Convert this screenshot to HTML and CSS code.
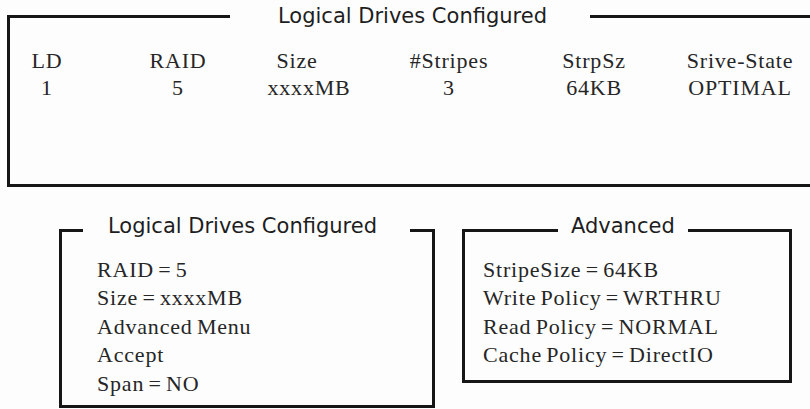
FILE: index.html
```html
<!DOCTYPE html>
<html lang="en">
<head>
    <meta charset="UTF-8">
    <meta name="viewport" content="width=device-width, initial-scale=1.0">
    <title>Logical Drives Configured</title>
    <link rel="stylesheet" href="styles.css">
</head>
<body>
    <fieldset class="panel panel-drives">
        <legend class="panel-title">Logical Drives Configured</legend>
        <div class="drive-table">
            <span>LD</span>
            <span>RAID</span>
            <span>Size</span>
            <span>#Stripes</span>
            <span>StrpSz</span>
            <span>Srive-State</span>
            <span>1</span>
            <span>5</span>
            <span class="size-cell">xxxxMB</span>
            <span>3</span>
            <span>64KB</span>
            <span>OPTIMAL</span>
        </div>
    </fieldset>

    <div class="settings">
        <fieldset class="panel panel-ld">
            <legend class="panel-title">Logical Drives Configured</legend>
            <ul class="option-list">
                <li>RAID = 5</li>
                <li>Size = xxxxMB</li>
                <li>Advanced Menu</li>
                <li>Accept</li>
                <li>Span = NO</li>
            </ul>
        </fieldset>

        <fieldset class="panel panel-advanced">
            <legend class="panel-title">Advanced</legend>
            <ul class="option-list">
                <li>StripeSize = 64KB</li>
                <li>Write Policy = WRTHRU</li>
                <li>Read Policy = NORMAL</li>
                <li>Cache Policy = DirectIO</li>
            </ul>
        </fieldset>
    </div>
</body>
</html>
```

FILE: styles.css
```css
body {
    margin: 0;
    background: #fdfdfd;
    color: #262626;
    font-family: "Liberation Serif", "Times New Roman", serif;
    font-size: 22px;
    letter-spacing: 0.8px;
    word-spacing: -2px;
    overflow: hidden;
}

.panel {
    margin: 0;
    min-width: 0;
    border: 3px solid #161616;
}

.panel-title {
    font-family: "DejaVu Sans", sans-serif;
    font-size: 21px;
    line-height: 30px;
    letter-spacing: 0;
    word-spacing: 0;
    color: #1e1e1e;
}

/* top table, runs off the right edge */
.panel-drives {
    margin: 1px 0 0 7px;
    border-right: none;
    padding: 16px 0 83px 0;
}

.panel-drives .panel-title {
    margin-left: 220px;
    padding: 0 43px 0 48px;
}

.drive-table {
    display: grid;
    grid-template-columns: 74px 188px 50px 254px 36px 256px;
    grid-auto-rows: 27px;
    justify-items: center;
    line-height: 27px;
    white-space: nowrap;
}

.drive-table .size-cell {
    margin-left: 24px;
}

.settings {
    display: flex;
    align-items: flex-start;
    gap: 27px;
    margin: 23.5px 0 0 59px;
}

.panel-ld {
    width: 376px;
    box-sizing: border-box;
    padding: 5px 0 7px 35px;
}

.panel-ld .panel-title {
    margin-left: -14px;
    padding: 0 33px 10px 25px;
}

.panel-advanced {
    width: 330px;
    box-sizing: border-box;
    padding: 5px 0 10px 18px;
}

.panel-advanced .panel-title {
    margin-left: 75px;
    padding: 0 13px 10px 13px;
}

.option-list {
    margin: 0;
    padding: 0;
    list-style: none;
    line-height: 28.5px;
    white-space: nowrap;
}
```
